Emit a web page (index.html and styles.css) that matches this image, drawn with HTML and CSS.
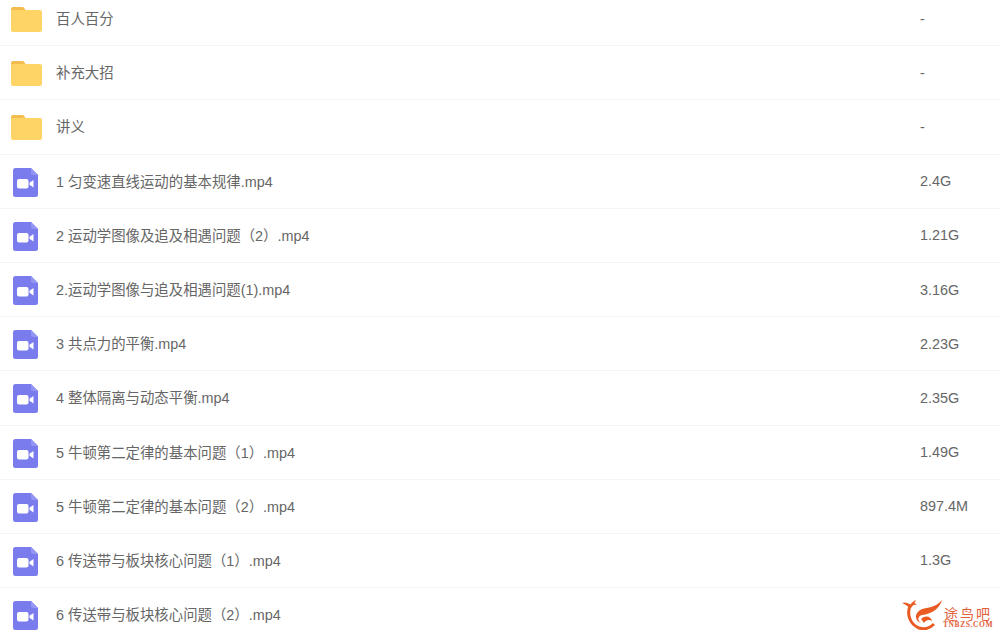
FILE: index.html
```html
<!DOCTYPE html>
<html lang="zh">
<head>
<meta charset="utf-8">
<title>文件列表</title>
<link rel="stylesheet" href="styles.css">
</head>
<body>
<svg class="sprites" width="0" height="0" aria-hidden="true">
  <symbol id="folder" viewBox="0 0 31 25">
    <path d="M0 2a2 2 0 0 1 2-2h9a3 3 0 0 1 2.600 1.400L15 4H0z" fill="#f2bd4e"/>
    <path d="M0 5a2 2 0 0 1 2-2h27a2 2 0 0 1 2 2v18a2 2 0 0 1-2 2H2a2 2 0 0 1-2-2z" fill="#ffd467"/>
  </symbol>
  <symbol id="video" viewBox="0 0 25 29">
    <path d="M2.500 0H18l7 7v19.500a2.500 2.500 0 0 1-2.500 2.500h-20A2.500 2.500 0 0 1 0 26.500v-24A2.500 2.500 0 0 1 2.500 0z" fill="#7a7cee"/>
    <path d="M18 0l7 7h-5a2 2 0 0 1-2-2z" fill="#9496f3"/>
    <rect x="4" y="11" width="11.500" height="9.500" rx="2" fill="#fff"/>
    <path d="M16.500 14.800l4-2.800v7.500l-4-2.800z" fill="#fff"/>
  </symbol>
</svg>
<main class="list">
  <div class="row"><svg class="icon folder"><use href="#folder"/></svg><span class="name">百人百分</span><span class="size">-</span></div>
  <div class="row"><svg class="icon folder"><use href="#folder"/></svg><span class="name">补充大招</span><span class="size">-</span></div>
  <div class="row"><svg class="icon folder"><use href="#folder"/></svg><span class="name">讲义</span><span class="size">-</span></div>
  <div class="row"><svg class="icon video"><use href="#video"/></svg><span class="name">1 匀变速直线运动的基本规律.mp4</span><span class="size">2.4G</span></div>
  <div class="row"><svg class="icon video"><use href="#video"/></svg><span class="name">2 运动学图像及追及相遇问题（2）.mp4</span><span class="size">1.21G</span></div>
  <div class="row"><svg class="icon video"><use href="#video"/></svg><span class="name">2.运动学图像与追及相遇问题(1).mp4</span><span class="size">3.16G</span></div>
  <div class="row"><svg class="icon video"><use href="#video"/></svg><span class="name">3 共点力的平衡.mp4</span><span class="size">2.23G</span></div>
  <div class="row"><svg class="icon video"><use href="#video"/></svg><span class="name">4 整体隔离与动态平衡.mp4</span><span class="size">2.35G</span></div>
  <div class="row"><svg class="icon video"><use href="#video"/></svg><span class="name">5 牛顿第二定律的基本问题（1）.mp4</span><span class="size">1.49G</span></div>
  <div class="row"><svg class="icon video"><use href="#video"/></svg><span class="name">5 牛顿第二定律的基本问题（2）.mp4</span><span class="size">897.4M</span></div>
  <div class="row"><svg class="icon video"><use href="#video"/></svg><span class="name">6 传送带与板块核心问题（1）.mp4</span><span class="size">1.3G</span></div>
  <div class="row"><svg class="icon video"><use href="#video"/></svg><span class="name">6 传送带与板块核心问题（2）.mp4</span><span class="size"></span></div>
</main>
<div class="logo">
  <svg class="logo-mark" viewBox="0 0 40 30" aria-hidden="true">
    <path d="M0 3C3 1.500 6 3 8.500 4.500 10 2.500 12 .5 14 0l-1.500 3 2.500 1.500c-3 0-5 1-5.500 3L7 8C6 6 3 4 0 3z" fill="#ea5b24"/>
    <path d="M8 6C5 13 7 24 17 28c6 2 11 0 15-4" fill="none" stroke="#ea5b24" stroke-width="3"/>
    <path d="M40 0c-2 8-10 14-20 15-4 1-5 5-1 8-6-2-7-9-1-13 6-3 16-2 22-10z" fill="#ea5b24"/>
    <path d="M19 19c4-4 10-3 11 2-3-2-6-1-8 2" fill="#ea5b24"/>
  </svg>
  <div class="logo-text">
    <span class="logo-cn">途鸟吧</span>
    <span class="logo-en">TNBZS.COM</span>
  </div>
</div>
</body>
</html>
```
FILE: styles.css
```css
html, body {
  margin: 0;
  height: 635px;
  overflow: hidden;
  background: #fff;
}
body {
  position: relative;
  font-family: "Liberation Sans", "Noto Sans CJK SC", sans-serif;
  font-size: 14.4px;
  color: #666;
}
.sprites {
  position: absolute;
}
.list {
  margin-top: -8px;
}
.row {
  display: flex;
  align-items: center;
  height: 54.2px;
  box-sizing: border-box;
  border-bottom: 1px solid #f5f5f5;
}
.icon {
  flex: none;
}
.folder {
  width: 31px;
  height: 25px;
  margin: 2px 14px 0 11px;
}
.video {
  width: 25px;
  height: 29px;
  margin: 2px 18px 0 13px;
}
.name {
  flex: 1;
  margin-bottom: 2px;
}
.size {
  width: 80px;
}
.logo {
  position: absolute;
  left: 902px;
  top: 600px;
  display: flex;
  align-items: flex-end;
  gap: 1px;
}
.logo-mark {
  width: 40px;
  height: 30px;
}
.logo-text {
  display: flex;
  flex-direction: column;
  align-items: center;
  color: #e2603a;
  margin-bottom: 1px;
}
.logo-cn {
  font-size: 14px;
  line-height: 13px;
  letter-spacing: 2px;
}
.logo-en {
  font-family: "Liberation Serif", serif;
  font-size: 7.500px;
  line-height: 8px;
  font-weight: bold;
  letter-spacing: .6px;
}
```
